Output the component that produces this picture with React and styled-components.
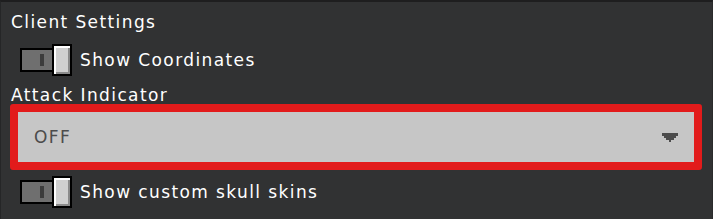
import styled, { createGlobalStyle } from "styled-components";

const GlobalStyle = createGlobalStyle`
  html, body {
    margin: 0;
    padding: 0;
    background: #313233;
  }
  body {
    font-family: "DejaVu Sans", "Liberation Sans", sans-serif;
  }
`;

const Panel = styled.main`
  width: 713px;
  height: 219px;
  box-sizing: border-box;
  background: #313233;
  border-top: 2px solid #1e1e1f;
  border-left: 1px solid #252627;
  border-right: 1px solid #2a2b2c;
  padding-left: 9px;
  display: flex;
  flex-direction: column;
  color: #ffffff;
  font-size: 17px;
  letter-spacing: 1.4px;
`;

const Title = styled.div`
  height: 39px;
  display: flex;
  align-items: center;
  padding-left: 1px;
`;

const FieldLabel = styled.div`
  height: 18px;
  line-height: 18px;
  padding-top: 10px;
  padding-left: 1px;
`;

const Row = styled.div`
  height: 32px;
  margin-top: ${(p) => p.$top}px;
  padding-left: 10px;
  display: flex;
  align-items: center;
  gap: 8px;
`;

const Switch = styled.div`
  display: flex;
  align-items: center;
`;

const Track = styled.div`
  width: 12px;
  height: 20px;
  padding-left: 18px;
  background: #6f6f6f;
  border: 2px solid #000;
  display: flex;
  align-items: center;
`;

const Notch = styled.div`
  width: 4px;
  height: 12px;
  background: #3c3c3c;
`;

const Knob = styled.div`
  width: 16px;
  height: 28px;
  margin-left: -2px;
  background: #d0d0d0;
  border: 2px solid #000;
  box-shadow: inset 2px 2px 0 #ffffff, inset -2px -2px 0 #8b8b8b;
`;

const Dropdown = styled.div`
  width: 692px;
  height: 66px;
  box-sizing: border-box;
  border: 8px solid #e21b1b;
  border-radius: 3px;
  background: #c6c6c6;
  display: flex;
  align-items: center;
  justify-content: space-between;
  padding: 0 16px;
  color: #4c4c4c;
`;

const Arrow = styled.svg`
  display: block;
`;

const Toggle = () => (
  <Switch>
    <Track>
      <Notch />
    </Track>
    <Knob />
  </Switch>
);

export default function App() {
  return (
    <Panel>
      <GlobalStyle />
      <Title>Client Settings</Title>
      <Row $top={3}>
        <Toggle />
        <span>Show Coordinates</span>
      </Row>
      <FieldLabel>Attack Indicator</FieldLabel>
      <Dropdown>
        <span>OFF</span>
        <Arrow width="16" height="9" viewBox="0 0 16 9">
          <path
            d="M0 0h16v3h-2v2h-2v2h-3v2h-2v-2h-3v-2h-2v-2h-2z"
            fill="#4c4c4c"
          />
        </Arrow>
      </Dropdown>
      <Row $top={6}>
        <Toggle />
        <span>Show custom skull skins</span>
      </Row>
    </Panel>
  );
}
